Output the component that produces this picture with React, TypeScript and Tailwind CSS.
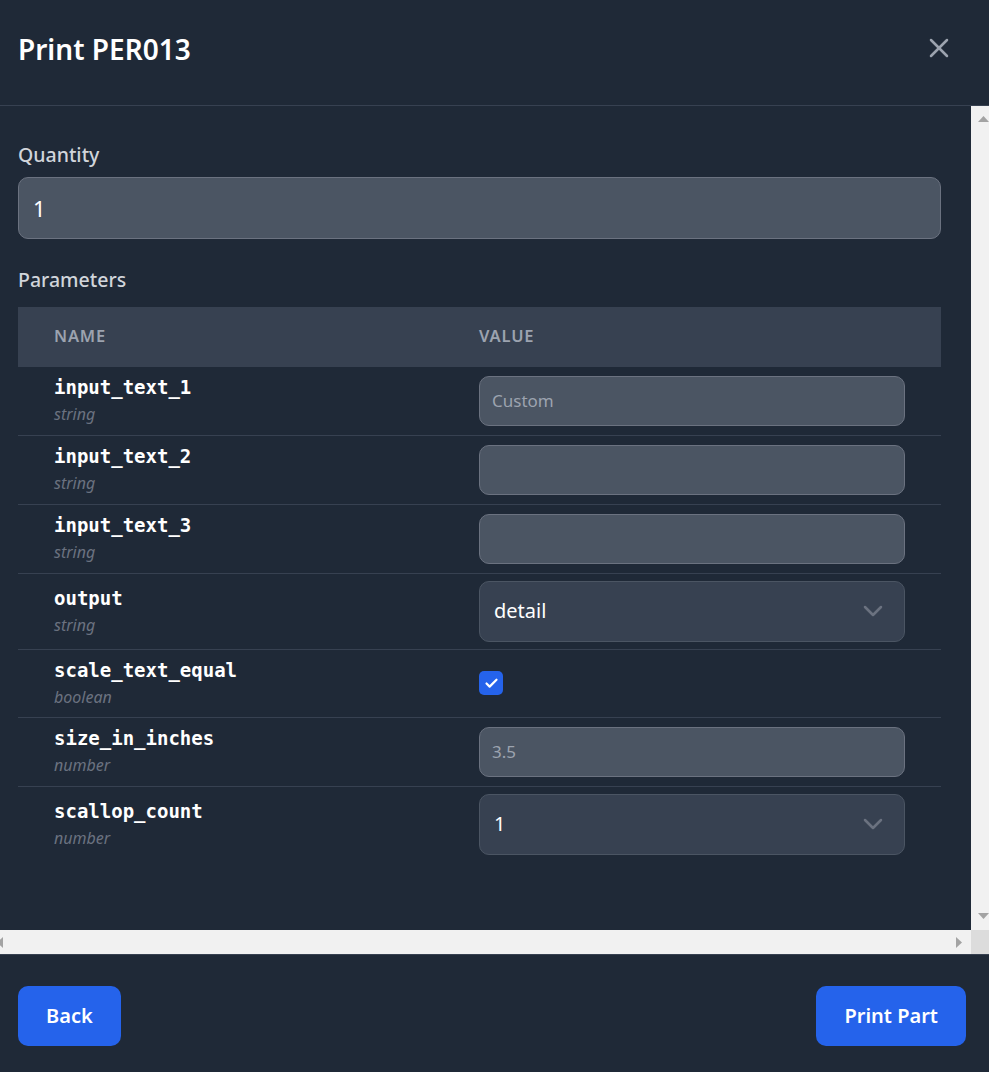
import React from 'react';
import { X, ChevronDown, Check } from 'lucide-react';

type Param = {
  name: string;
  type: string;
  kind: 'text' | 'select' | 'checkbox';
  value?: string;
  placeholder?: string;
};

const params: Param[] = [
  { name: 'input_text_1', type: 'string', kind: 'text', placeholder: 'Custom' },
  { name: 'input_text_2', type: 'string', kind: 'text' },
  { name: 'input_text_3', type: 'string', kind: 'text' },
  { name: 'output', type: 'string', kind: 'select', value: 'detail' },
  { name: 'scale_text_equal', type: 'boolean', kind: 'checkbox' },
  { name: 'size_in_inches', type: 'number', kind: 'text', placeholder: '3.5' },
  { name: 'scallop_count', type: 'number', kind: 'select', value: '1' },
];

// little grey triangles of the scrollbar buttons
const Arrow = ({ dir }: { dir: 'up' | 'down' | 'left' | 'right' }) => {
  const pts = {
    up: '0,6 5.5,0 11,6',
    down: '0,0 11,0 5.5,6',
    left: '6,0 6,11 0,5.5',
    right: '0,0 6,5.5 0,11',
  }[dir];
  const vertical = dir === 'up' || dir === 'down';
  return (
    <svg width={vertical ? 11 : 6} height={vertical ? 6 : 11} className="shrink-0">
      <polygon points={pts} fill="#a3a3a3" />
    </svg>
  );
};

const ValueCell = ({ p }: { p: Param }) => {
  if (p.kind === 'checkbox') {
    return (
      <div className="w-[24px] h-[24px] rounded-[5px] bg-[#2563eb] flex items-center justify-center">
        <Check size={15} strokeWidth={3.5} className="text-white" />
      </div>
    );
  }
  if (p.kind === 'select') {
    return (
      <div className="h-[61px] rounded-[10px] bg-[#374151] border border-[#4b5563] flex items-center justify-between pl-[14px] pr-[15px]">
        <span className="text-[20px] text-white">{p.value}</span>
        <ChevronDown size={32} strokeWidth={1.9} className="text-[#6b7280]" />
      </div>
    );
  }
  return (
    <div className="h-[50px] rounded-[10px] bg-[#4b5563] border border-[#6b7280] flex items-center px-3">
      <span className="text-[17px] text-[#9ca3af]">{p.placeholder}</span>
    </div>
  );
};

export default function App() {
  return (
    <div
      className="h-[1072px] w-[989px] flex flex-col bg-[#1f2937] text-white overflow-hidden"
      style={{ fontFamily: '"Noto Sans", sans-serif' }}
    >
      <header className="h-[106px] shrink-0 flex items-center justify-between pl-[18px] pr-[34px] pb-[8px] border-b border-[#374151]">
        <h2 className="text-[28px] font-semibold">Print PER013</h2>
        <div className="-mt-[2px]">
          <X size={32} strokeWidth={1.9} className="text-[#9ca3af]" />
        </div>
      </header>

      {/* scroll area with its (always visible) scrollbars */}
      <div className="h-[848px] shrink-0 flex flex-col">
        <div className="flex-1 flex min-h-0">
          <div className="flex-1 min-w-0 overflow-hidden">
            <div className="pl-[18px] pr-[30px] pt-[34px]">
              <label className="block text-[19.5px] font-medium text-[#d1d5db] mb-[8px]">Quantity</label>
              <div className="h-[62px] rounded-[10px] bg-[#4b5563] border border-[#6b7280] flex items-center px-[14px]">
                <span className="text-[22px] text-white">1</span>
              </div>

              <h3 className="mt-[26px] mb-[12px] text-[19.5px] font-medium text-[#d1d5db]">Parameters</h3>
              <table className="w-full border-collapse">
                <thead>
                  <tr className="bg-[#374151] h-[60px]">
                    <th className="w-[461px] text-left px-9 text-[16.5px] font-semibold tracking-wider text-[#9ca3af]">NAME</th>
                    <th className="text-left px-0 text-[16.5px] font-semibold tracking-wider text-[#9ca3af]">VALUE</th>
                  </tr>
                </thead>
                <tbody>
                  {params.map((p, idx) => (
                    <tr key={p.name} className={idx < params.length - 1 ? 'border-b border-[#374151]' : ''}>
                      <td className={'px-9 align-middle ' + (p.kind === 'select' ? 'py-[7px]' : 'py-[9px]')}>
                        <div className="font-bold text-[19px] leading-[22px]" style={{ fontFamily: '"DejaVu Sans Mono", monospace' }}>
                          {p.name}
                        </div>
                        <div className="mt-[5px] italic text-[16px] text-[#6b7280] leading-[22px]">{p.type}</div>
                      </td>
                      <td className={'pr-9 align-middle ' + (p.kind === 'select' ? 'py-[7px]' : 'py-[9px]')}>
                        <ValueCell p={p} />
                      </td>
                    </tr>
                  ))}
                </tbody>
              </table>
            </div>
          </div>
          <div className="w-[18px] shrink-0 bg-[#f1f1f1] flex flex-col justify-between items-end pt-[10px] pb-[11px]">
            <Arrow dir="up" />
            <Arrow dir="down" />
          </div>
        </div>
        <div className="h-[24px] shrink-0 flex">
          <div className="flex-1 bg-[#f1f1f1] flex items-center justify-between pr-[9px]">
            <div className="-ml-[3px]">
              <Arrow dir="left" />
            </div>
            <Arrow dir="right" />
          </div>
          <div className="w-[18px] bg-[#dcdcdc]" />
        </div>
      </div>

      <footer className="flex-1 flex items-start justify-between pl-[18px] pr-[23px] pt-[31px] border-t border-[#374151]">
        <button className="h-[60px] px-[28px] rounded-[10px] bg-[#2563eb] text-white text-[20px] font-semibold">Back</button>
        <button className="h-[60px] px-[28px] rounded-[10px] bg-[#2563eb] text-white text-[20px] font-semibold">Print Part</button>
      </footer>
    </div>
  );
}
